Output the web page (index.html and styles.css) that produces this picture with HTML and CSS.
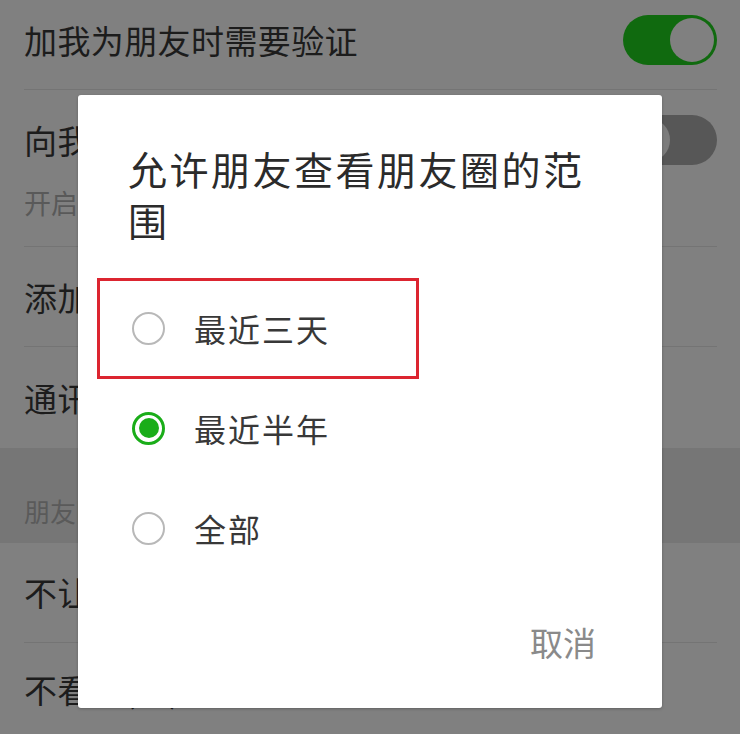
FILE: index.html
```html
<!DOCTYPE html>
<html lang="zh-CN">
<head>
<meta charset="utf-8">
<title>朋友圈权限</title>
<link rel="stylesheet" href="styles.css">
</head>
<body>
<div class="screen">
  <div class="list">
    <div class="row row-first">
      <span class="row-title">加我为朋友时需要验证</span>
      <span class="toggle toggle-on"><span class="knob"></span></span>
    </div>
    <div class="row row-tall">
      <div class="row-text">
        <div class="row-title">向我推荐通讯录朋友</div>
        <div class="row-sub">开启后，为你推荐已经开通微信的手机联系人</div>
      </div>
      <span class="toggle toggle-off"><span class="knob"></span></span>
    </div>
    <div class="row">
      <span class="row-title">添加我的方式</span>
    </div>
    <div class="row row-last">
      <span class="row-title">通讯录黑名单</span>
    </div>
  </div>
  <div class="section">朋友圈</div>
  <div class="list">
    <div class="row row-five">
      <span class="row-title">不让他(她)看我的朋友圈</span>
    </div>
    <div class="row row-six">
      <span class="row-title">不看他(她)的朋友圈</span>
    </div>
  </div>

  <div class="dialog">
    <div class="dialog-title">允许朋友查看朋友圈的范围</div>
    <div class="options">
      <div class="option option-marked">
        <span class="radio"></span>
        <span class="option-label">最近三天</span>
      </div>
      <div class="option">
        <span class="radio radio-checked"></span>
        <span class="option-label">最近半年</span>
      </div>
      <div class="option">
        <span class="radio"></span>
        <span class="option-label">全部</span>
      </div>
    </div>
    <div class="dialog-actions">
      <span class="cancel">取消</span>
    </div>
  </div>
</div>
</body>
</html>
```

FILE: styles.css
```css
*,
*::before,
*::after {
  box-sizing: border-box;
}

html, body {
  margin: 0;
  padding: 0;
}

body {
  width: 740px;
  height: 734px;
  overflow: hidden;
  background: #808080;
  font-family: "Noto Sans CJK SC", "Noto Sans", sans-serif;
}

.screen {
  position: relative;
  width: 740px;
  height: 734px;
  overflow: hidden;
  background: #808080;
}

.list {
  padding: 0 23px 0 24px;
}

.row {
  display: flex;
  align-items: center;
  justify-content: space-between;
  height: 100px;
  border-bottom: 1px solid #747474;
}

.row-title {
  font-size: 33px;
  line-height: 40px;
  color: #1c1c1c;
  letter-spacing: 0.4px;
  white-space: nowrap;
}

.row-first {
  height: 90px;
  padding-bottom: 10px;
}

.row-tall {
  height: 157px;
  align-items: flex-start;
  padding-top: 30px;
}

.row-tall .toggle {
  margin-top: -5px;
}

.row-sub {
  margin-top: 26px;
  font-size: 27px;
  line-height: 34px;
  color: #595959;
  white-space: nowrap;
}

.row-last {
  height: 101px;
  border-bottom: none;
}

.row-five {
  padding-bottom: 2px;
}

.row-six {
  border-bottom: none;
  padding-bottom: 9px;
}

.section {
  height: 95px;
  background: #767676;
  padding: 47px 24px 0;
  font-size: 26px;
  line-height: 32px;
  color: #5a5a5a;
}

.toggle {
  flex: none;
  position: relative;
  width: 94px;
  height: 50px;
  border-radius: 25px;
}

.toggle-on {
  background: #106a0f;
}

.toggle-off {
  background: #575757;
}

.knob {
  position: absolute;
  top: 3px;
  width: 44px;
  height: 44px;
  border-radius: 50%;
}

.toggle-on .knob {
  right: 3px;
  background: #808080;
}

.toggle-off .knob {
  left: 3px;
  background: #7c7c7c;
}

.dialog {
  position: absolute;
  left: 78px;
  top: 95px;
  width: 584px;
  height: 613px;
  background: #ffffff;
  border-radius: 3px;
  box-shadow: 0 1px 3px rgba(0, 0, 0, 0.25);
  padding: 48px 0 41px;
  display: flex;
  flex-direction: column;
}

.dialog-title {
  padding: 0 46px 0 50px;
  font-size: 39px;
  line-height: 51px;
  letter-spacing: 2.5px;
  color: #2b2b2b;
}

.options {
  margin-top: 33px;
}

.option {
  position: relative;
  display: flex;
  align-items: center;
  height: 100px;
  padding-left: 54px;
}

.option-marked::after {
  content: "";
  position: absolute;
  left: 19px;
  top: 0;
  width: 322px;
  height: 101px;
  border: 3px solid #dc2530;
}

.radio {
  flex: none;
  width: 33px;
  height: 33px;
  border-radius: 50%;
  border: 2.5px solid #b8b8b8;
  margin-right: 29px;
  position: relative;
}

.radio-checked {
  border: 3px solid #1aad19;
}

.radio-checked::after {
  content: "";
  position: absolute;
  left: 3.5px;
  top: 3.5px;
  width: 20px;
  height: 20px;
  border-radius: 50%;
  background: #1aad19;
}

.option-label {
  font-size: 32px;
  line-height: 40px;
  letter-spacing: 2px;
  color: #383838;
}

.dialog-actions {
  margin-top: 39px;
  display: flex;
  justify-content: flex-end;
  padding-right: 66px;
}

.cancel {
  font-size: 33px;
  line-height: 50px;
  color: #8a8a8a;
}
```
